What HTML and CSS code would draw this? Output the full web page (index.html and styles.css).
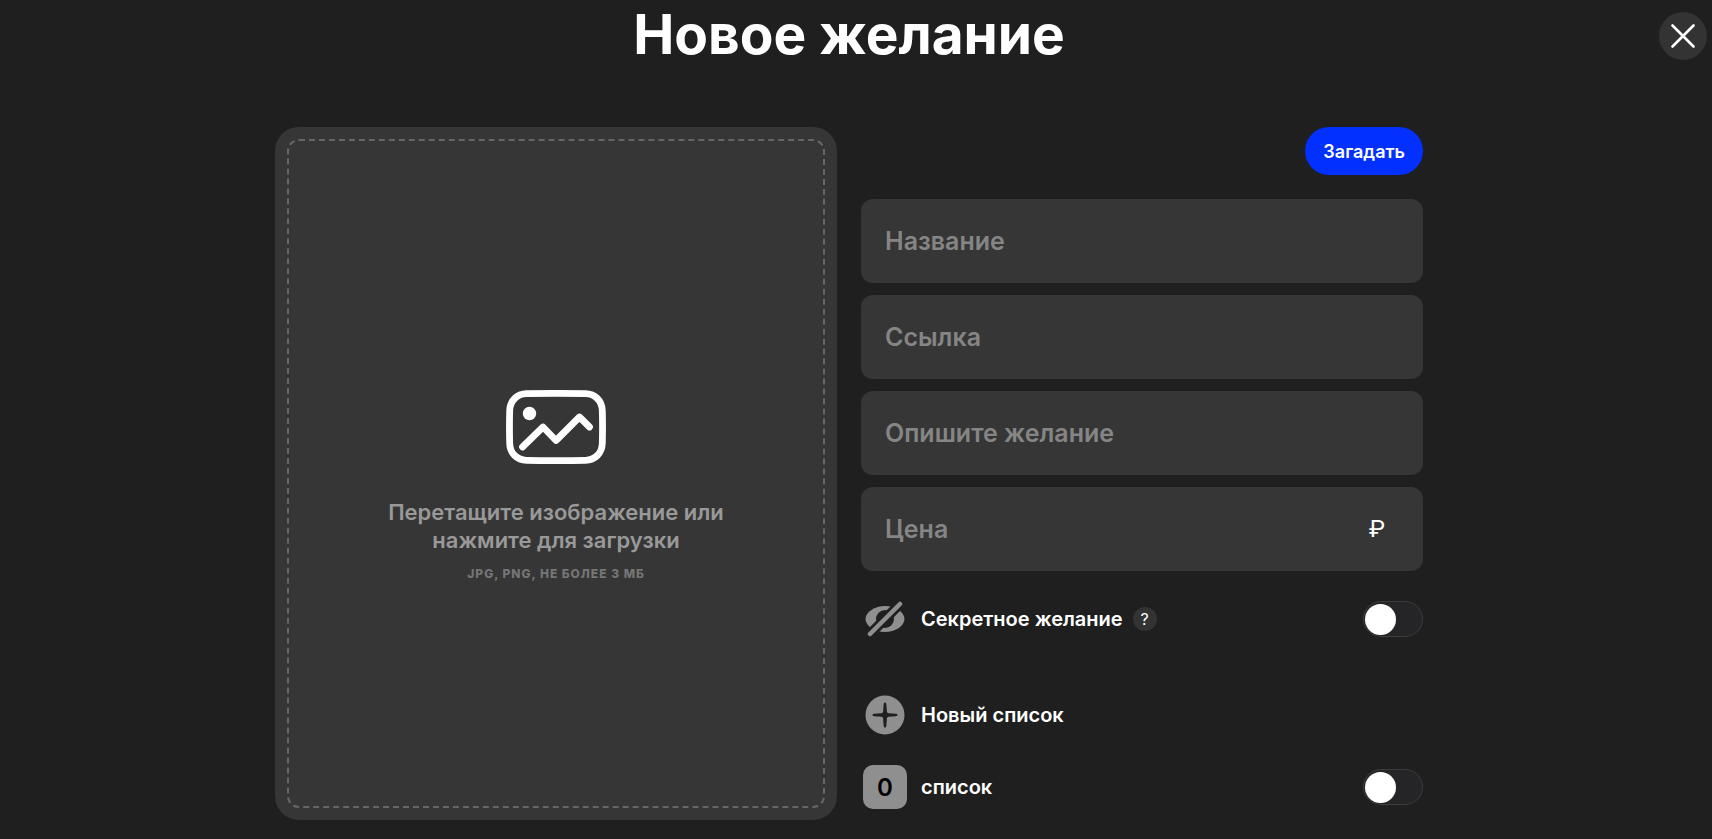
FILE: index.html
```
<!DOCTYPE html>
<html lang="ru">
<head>
<meta charset="utf-8">
<meta name="viewport" content="width=device-width, initial-scale=1">
<title>Новое желание</title>
<link rel="stylesheet" href="styles.css">
</head>
<body>
<button class="close" type="button" aria-label="Закрыть">
  <svg width="24" height="24" viewBox="0 0 24 24" fill="none" stroke="#fff" stroke-width="2.6" stroke-linecap="round"><path d="M1.500 1.500 22.500 22.500M22.500 1.500 1.500 22.500"/></svg>
</button>
<main class="page">
  <h1 class="title">Новое желание</h1>
  <form class="wish">
    <button class="upload" type="button">
      <span class="upload-zone">
        <svg class="upload-icon" width="100" height="74" viewBox="0 0 100 74" fill="none" stroke="#fff" stroke-width="6.8" stroke-linecap="round" stroke-linejoin="round">
          <path d="M20.500 3.700C40 3.300 60 3.300 79.500 3.700C89 3.900 96 10.700 96.300 20.500C96.600 31 96.600 43 96.300 53.500C96 63.300 89 70.100 79.500 70.300C60 70.700 40 70.700 20.500 70.300C11 70.100 4 63.300 3.700 53.500C3.400 43 3.400 31 3.700 20.500C4 10.700 11 3.900 20.500 3.700Z"/>
          <path d="M16.500 57 37 37 50 50.500 73.500 27 83.500 37"/>
          <circle cx="23.500" cy="23.500" r="6.700" fill="#fff" stroke="none"/>
        </svg>
        <span class="upload-text">Перетащите изображение или нажмите для загрузки</span>
        <span class="upload-note">JPG, PNG, не более 3 МБ</span>
      </span>
    </button>
    <div class="details">
      <button class="submit" type="submit">Загадать</button>
      <div class="fields">
        <input class="field" type="text" placeholder="Название" aria-label="Название">
        <input class="field" type="text" placeholder="Ссылка" aria-label="Ссылка">
        <input class="field" type="text" placeholder="Опишите желание" aria-label="Опишите желание">
        <div class="field price">
          <input class="price-input" type="text" inputmode="numeric" placeholder="Цена" aria-label="Цена">
          <span class="currency">₽</span>
        </div>
      </div>
      <div class="option secret">
        <span class="option-icon">
          <svg width="40" height="36" viewBox="0 0 40 36">
            <defs>
              <mask id="eye-cut">
                <path fill="#fff" d="M0 0H40V36H0Z"/>
                <circle cx="20" cy="18" r="9" fill="#000"/>
                <path d="M0 38 40 -2" stroke="#000" stroke-width="10"/>
              </mask>
            </defs>
            <path mask="url(#eye-cut)" fill="#8f8f8f" d="M20 5C30 5 39.500 11 39.500 18S30 31 20 31 .500 25 .500 18 10 5 20 5Z"/>
            <path d="M5 33 35 3" stroke="#8f8f8f" stroke-width="4.500" stroke-linecap="round"/>
          </svg>
        </span>
        <label class="option-name" for="secret">Секретное желание</label>
        <button class="hint" type="button" aria-label="Что такое секретное желание">?</button>
        <input class="toggle" id="secret" type="checkbox">
      </div>
      <button class="option new-list" type="button">
        <span class="option-icon">
          <svg width="40" height="40" viewBox="0 0 40 40"><circle cx="20" cy="20" r="19.500" fill="#8f8f8f"/><path fill="#1f1f1f" d="M20 7.500Q21.200 7.500 21.300 9L21.900 16.500Q22.100 18 23.500 18.200L31 18.800Q32.500 18.900 32.500 20T31 21.200L23.500 21.800Q22.100 22 21.900 23.500L21.300 31Q21.200 32.500 20 32.500T18.700 31L18.100 23.500Q17.900 22 16.500 21.800L9 21.200Q7.500 21.100 7.500 20T9 18.800L16.500 18.200Q17.900 18 18.100 16.500L18.700 9Q18.800 7.500 20 7.500Z"/></svg>
        </span>
        <span class="option-name">Новый список</span>
      </button>
      <div class="option">
        <span class="option-icon count">0</span>
        <label class="option-name" for="list">список</label>
        <input class="toggle" id="list" type="checkbox">
      </div>
    </div>
  </form>
</main>
</body>
</html>
```
FILE: styles.css
```
* {
  box-sizing: border-box;
}

body {
  margin: 0;
  padding-right: 14px;
  background: #1f1f1f;
  color: #fff;
  font-family: Inter, "Liberation Sans", sans-serif;
}

button,
input {
  margin: 0;
  border: 0;
  color: inherit;
  font-family: inherit;
}

button {
  cursor: pointer;
}

.close {
  position: absolute;
  top: 12px;
  right: 5px;
  display: flex;
  align-items: center;
  justify-content: center;
  width: 48px;
  height: 48px;
  padding: 0;
  border-radius: 50%;
  background: #333;
}

.page {
  max-width: 1196px;
  margin: 0 auto;
  padding: 0 24px 16px;
}

.title {
  margin: 0 0 59px;
  font-size: 55px;
  font-weight: 700;
  line-height: 68px;
  text-align: center;
}

.wish {
  display: grid;
  grid-template-columns: 1fr 1fr;
  align-items: start;
  gap: 24px;
}

.upload {
  display: flex;
  min-height: 693px;
  padding: 12px;
  border-radius: 24px;
  background: #363636;
}

.upload-zone {
  display: flex;
  flex: 1;
  flex-direction: column;
  align-items: center;
  align-self: stretch;
  justify-content: center;
  padding-top: 24px;
  border: 2px dashed #666;
  border-radius: 12px;
}

.upload-text {
  max-width: 360px;
  margin-top: 34px;
  color: #999;
  font-size: 22px;
  font-weight: 600;
  line-height: 28px;
}

.upload-note {
  margin-top: 12px;
  color: #757575;
  font-size: 12px;
  font-weight: 800;
  letter-spacing: 1px;
  line-height: 16px;
  text-transform: uppercase;
}

.details {
  display: flex;
  flex-direction: column;
}

.submit {
  align-self: flex-end;
  height: 48px;
  padding: 0 18px;
  border-radius: 24px;
  background: #0231ff;
  font-size: 18px;
  font-weight: 600;
}

.fields {
  display: grid;
  gap: 12px;
  margin-top: 24px;
}

.field {
  width: 100%;
  height: 84px;
  padding: 0 24px;
  border-radius: 12px;
  background: #363636;
  font-size: 25px;
  font-weight: 600;
}

.field::placeholder,
.price-input::placeholder {
  color: #858585;
  opacity: 1;
}

.price {
  display: flex;
  align-items: center;
  padding-right: 38px;
}

.price-input {
  flex: 1;
  min-width: 0;
  padding: 0;
  background: none;
  font-size: inherit;
  font-weight: inherit;
}

.currency {
  font-family: Roboto, sans-serif;
  font-size: 24px;
  font-weight: 400;
}

.option {
  display: flex;
  align-items: center;
  width: 100%;
  height: 72px;
  padding: 0 0 0 2px;
  background: none;
  font-size: 20px;
  font-weight: 600;
}

.secret {
  margin: 12px 0 24px;
}

.option-icon {
  display: flex;
  align-items: center;
  justify-content: center;
  width: 44px;
  height: 44px;
  margin-right: 14px;
}

.count {
  border-radius: 10px;
  background: #8f8f8f;
  color: #000;
  font-size: 24px;
}

.hint {
  width: 24px;
  height: 24px;
  margin-left: 10px;
  padding: 0;
  border-radius: 50%;
  background: #333;
  font-size: 16px;
  font-weight: 400;
}

.toggle {
  display: flex;
  align-items: center;
  width: 60px;
  height: 36px;
  margin-left: auto;
  padding: 1px;
  border: 1px solid #3d3d3d;
  border-radius: 18px;
  background: #252527;
  appearance: none;
  cursor: pointer;
}

.toggle::before {
  width: 31px;
  height: 31px;
  border-radius: 50%;
  background: #fff;
  content: "";
}

.toggle:checked {
  justify-content: flex-end;
  background: #0231ff;
}

@media (max-width: 800px) {
  .wish {
    grid-template-columns: 1fr;
  }
}
```
